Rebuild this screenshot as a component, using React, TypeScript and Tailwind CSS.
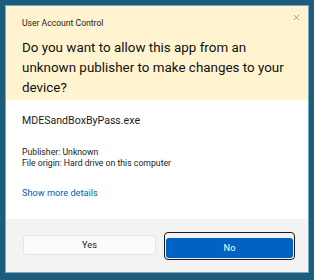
import { X } from 'lucide-react';

const App = () => {
  return (
    <div className="w-[314px] h-[280px] bg-[#1c5d7c] pt-[5px] pl-[5px] pr-[5px] pb-[7px]" style={{ fontFamily: 'Roboto, "Noto Sans", sans-serif' }}>
      <div className="flex flex-col h-full w-[304px] border border-[#7ea6bd] overflow-hidden">
        {/* Header */}
        <div className="relative bg-[#fff4cf] pl-[16px] pr-[14px] pt-[11px] pb-[2px]">
          <p className="text-[8.6px] leading-[12px] text-[#1b1b1b]">User Account Control</p>
          <button className="absolute top-[4px] right-[5px] w-[14px] h-[14px] flex items-center justify-center text-[#5c5c5c]">
            <X size={9} strokeWidth={1.5} />
          </button>
          <h1 className="mt-[9px] text-[13.4px] leading-[20px] text-[#111111]">
            Do you want to allow this app from an unknown publisher to make changes to your device?
          </h1>
        </div>

        {/* Body */}
        <div className="bg-white pl-[16px] pt-[12px] flex-1">
          <p className="text-[10.6px] leading-[18px] text-[#1b1b1b]">MDESandBoxByPass.exe</p>
          <div className="mt-[17px] text-[8.7px] leading-[11px] text-[#1b1b1b]">
            <p>Publisher: Unknown</p>
            <p>File origin: Hard drive on this computer</p>
          </div>
          <p className="mt-[18px] text-[9.2px] leading-[12px] text-[#0063b1]">Show more details</p>
        </div>

        {/* Footer */}
        <div className="bg-[#f3f3f3] h-[53px] flex items-start pt-[16px] pl-[17px] gap-[8px]">
          <button className="w-[133px] h-[20px] rounded-[3px] bg-[#fbfbfb] border border-[#e6e6e6] text-[9.2px] text-[#1b1b1b]">
            Yes
          </button>
          <div className="rounded-[4px] border-[1.5px] border-[#1b1b1b] p-[1px] -mt-[3px]">
            <button className="w-[127px] h-[20px] rounded-[3px] bg-[#0063c4] text-[9.2px] text-white">
              No
            </button>
          </div>
        </div>
      </div>
    </div>
  );
};

export default App;
